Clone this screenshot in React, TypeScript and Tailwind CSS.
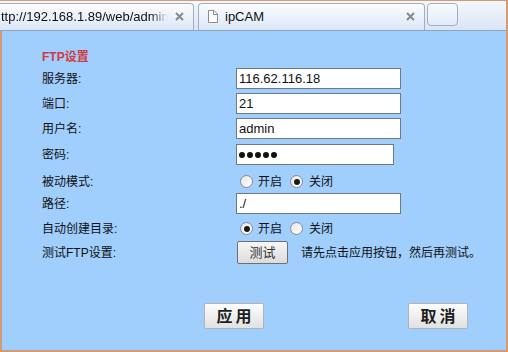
const FONT = "font-['Liberation_Sans','Noto_Sans_CJK_SC',sans-serif]";

function CloseX() {
  return (
    <svg width="9" height="9" viewBox="0 0 9 9" className="shrink-0">
      <path d="M1 1L8 8M8 1L1 8" stroke="#8a8a8a" strokeWidth="2" />
    </svg>
  );
}

function DocIcon() {
  return (
    <svg width="11" height="13" viewBox="0 0 11 13" className="shrink-0">
      <path d="M1.5 0.5H7L10.5 4V12.5H1.5Z" fill="#fff" stroke="#8c8c8c" />
      <path d="M6.5 0.5V4.5H10.5" fill="none" stroke="#8c8c8c" />
    </svg>
  );
}

function Radio({ checked }: { checked?: boolean }) {
  return (
    <span className="w-[13px] h-[13px] rounded-full border border-[#8a8a8a] bg-gradient-to-br from-[#e6e6e6] to-white flex items-center justify-center shrink-0">
      {checked && <span className="w-[6px] h-[6px] rounded-full bg-[#1a1a1a]" />}
    </span>
  );
}

function RadioPair({ on }: { on: boolean }) {
  return (
    <div className="flex items-center h-[21px] pl-[4px]">
      <Radio checked={on} />
      <span className="ml-[5px] w-[24px]">开启</span>
      <span className="ml-[8px]">
        <Radio checked={!on} />
      </span>
      <span className="ml-[6px]">关闭</span>
    </div>
  );
}

function TextBox({ value, w = 165 }: { value: string; w?: number }) {
  return (
    <div
      className={`h-[21px] border border-[#6e7985] bg-white flex items-center pl-[2px] text-[13px] text-[#111] font-['Liberation_Sans',sans-serif] ${
        w === 165 ? "w-[165px]" : "w-[158px]"
      }`}
    >
      {value}
    </div>
  );
}

function Row({ label, children, mt, h = 21 }: { label: string; children: React.ReactNode; mt: string; h?: number }) {
  return (
    <div className={`flex items-center ${mt} ${h === 23 ? "h-[23px]" : "h-[21px]"}`}>
      <div className="w-[194px] shrink-0">{label}</div>
      {children}
    </div>
  );
}

export default function App() {
  return (
    <div className={`w-[508px] h-[352px] bg-[#d49a71] pt-px pr-[2px] pb-[2px] flex flex-col overflow-hidden ${FONT}`}>
      {/* tab strip */}
      <div className="h-[30px] shrink-0 flex items-end border-b border-[#8ea3bd] bg-gradient-to-b from-[#f3f7fc] to-[#d9e6f6] font-['Liberation_Sans',sans-serif] text-[13px] text-[#111]">
        <div className="w-[194px] h-[27px] flex items-start pt-[5px] border-t border-r border-[#a3aebb] rounded-tr-[4px] bg-gradient-to-b from-[#fbfcfe] to-[#dbe7f6]">
          <span className="w-[170px] pl-[1px] overflow-hidden whitespace-nowrap leading-[16px] [mask-image:linear-gradient(to_right,black_150px,transparent_168px)]">
            ttp://192.168.1.89/web/admin
          </span>
          <span className="ml-[5px] mt-[3px]">
            <CloseX />
          </span>
        </div>
        <div className="ml-[4px] w-[227px] h-[27px] flex items-start pt-[5px] pl-[8px] border-t border-l border-r border-[#a3aebb] rounded-t-[4px] bg-gradient-to-b from-[#fbfcfe] to-[#dbe7f6]">
          <span className="mt-[1px]">
            <DocIcon />
          </span>
          <span className="ml-[7px] leading-[16px] flex-1">ipCAM</span>
          <span className="mr-[9px] mt-[3px]">
            <CloseX />
          </span>
        </div>
        <div className="ml-[2px] self-start mt-[2px] w-[31px] h-[23px] rounded-[4px] border border-[#a3aebb] bg-gradient-to-b from-[#f8fafd] to-[#e2ebf7]" />
      </div>

      {/* content */}
      <div className="flex-1 ml-[2px] bg-[#a0cefd] pt-[18px] pl-[40px] text-[12px] leading-[16px] text-[#111]">
        <div className="font-bold text-[#cf3b3f] h-[16px] leading-[16px]">FTP设置</div>

        <Row label="服务器:" mt="mt-[3px]">
          <TextBox value="116.62.116.18" />
        </Row>
        <Row label="端口:" mt="mt-[4px]">
          <TextBox value="21" />
        </Row>
        <Row label="用户名:" mt="mt-[4px]">
          <TextBox value="admin" />
        </Row>
        <Row label="密码:" mt="mt-[5px]">
          <div className="w-[158px] h-[21px] border border-[#6e7985] bg-white flex items-center pl-[2px] gap-[2px]">
            <span className="w-[6px] h-[6px] rounded-full bg-[#111]" />
            <span className="w-[6px] h-[6px] rounded-full bg-[#111]" />
            <span className="w-[6px] h-[6px] rounded-full bg-[#111]" />
            <span className="w-[6px] h-[6px] rounded-full bg-[#111]" />
            <span className="w-[6px] h-[6px] rounded-full bg-[#111]" />
          </div>
        </Row>
        <Row label="被动模式:" mt="mt-[6px]">
          <RadioPair on={false} />
        </Row>
        <Row label="路径:" mt="mt-[1px]">
          <TextBox value="./" />
        </Row>
        <Row label="自动创建目录:" mt="mt-[4px]">
          <RadioPair on={true} />
        </Row>
        <Row label="测试FTP设置:" mt="mt-[2px]" h={23}>
          <button className="ml-[1px] w-[51px] h-[23px] border border-[#707070] rounded-[2px] bg-gradient-to-b from-[#f6f6f6] to-[#dcdcdc] text-[13px] text-[#333] leading-[16px]">
            测试
          </button>
          <span className="ml-[13px]">请先点击应用按钮，然后再测试。</span>
        </Row>

        <div className="flex mt-[39px] pl-[162px]">
          <button className="w-[60px] h-[26px] pt-[2px] pl-[3px] border border-[#b3b3b3] rounded-[2px] bg-gradient-to-b from-[#fdfdfd] to-[#e1e1e1] text-[16px] font-bold tracking-[3px] text-[#1e1e1e] leading-[20px]">
            应用
          </button>
          <button className="ml-[144px] w-[60px] h-[26px] pt-[2px] pl-[3px] border border-[#b3b3b3] rounded-[2px] bg-gradient-to-b from-[#fdfdfd] to-[#e1e1e1] text-[16px] font-bold tracking-[3px] text-[#1e1e1e] leading-[20px]">
            取消
          </button>
        </div>
      </div>
    </div>
  );
}
